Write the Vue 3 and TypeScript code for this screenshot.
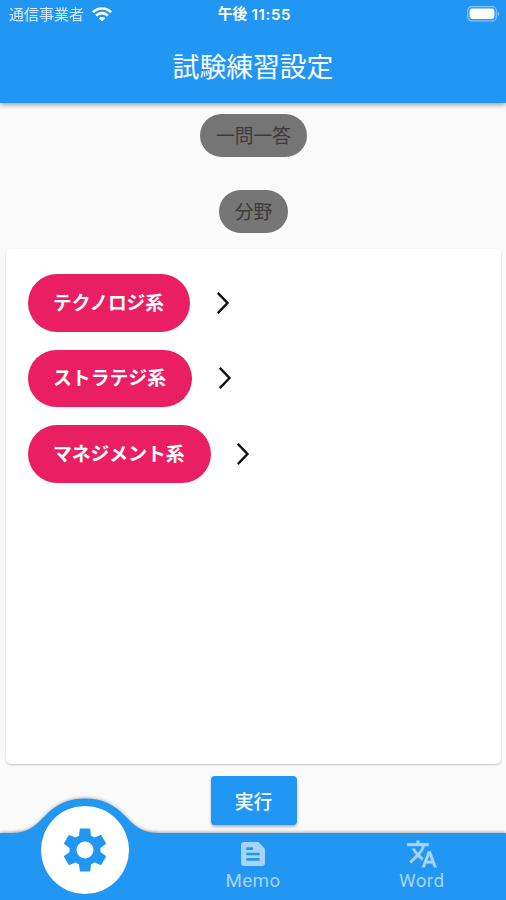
<script setup lang="ts">
interface Category {
  label: string
  width: number
}

const categories: Category[] = [
  { label: 'テクノロジ系', width: 111 },
  { label: 'ストラテジ系', width: 113 },
  { label: 'マネジメント系', width: 131.5 },
]

const teeth: number[] = [0, 60, 120, 180, 240, 300]
</script>

<template>
  <div class="screen">
    <header class="header">
      <div class="status">
        <div class="carrier">
          <span class="carrier-name">通信事業者</span>
          <svg class="wifi" viewBox="0 0 20 15">
            <path d="M1 5.2a12.8 12.8 0 0 1 18 0M4.2 8.6a8.2 8.2 0 0 1 11.6 0" fill="none" stroke="#fff" stroke-width="2.7" />
            <path d="M10 14.6l-3.2-3.3a4.6 4.6 0 0 1 6.4 0z" fill="#fff" />
          </svg>
        </div>
        <div class="clock"><span>午後</span><span class="digits">11:55</span></div>
        <svg class="battery" viewBox="0 0 33 16">
          <rect x=".7" y=".7" width="28.6" height="14.2" rx="4" fill="none" stroke="#fff" stroke-opacity=".45" stroke-width="1.2" />
          <rect x="2.6" y="2.6" width="24.8" height="10.4" rx="2.4" fill="#fff" />
          <path d="M30.8 5.4c1.6.6 1.6 4.2 0 4.8z" fill="#fff" fill-opacity=".5" />
        </svg>
      </div>
      <h1 class="title">試験練習設定</h1>
    </header>

    <main class="content">
      <span class="chip">一問一答</span>
      <span class="chip chip-second">分野</span>

      <section class="card">
        <div v-for="item in categories" :key="item.label" class="row">
          <button class="pill" type="button">
            <svg class="pill-text" :style="{ width: item.width + 'px' }" height="24">
              <text x="0" y="19" :textLength="item.width" lengthAdjust="spacingAndGlyphs">{{ item.label }}</text>
            </svg>
          </button>
          <svg class="chevron" viewBox="0 0 14 24">
            <path d="M1.8 1.8L11.5 12 1.8 22.2" fill="none" stroke="#111" stroke-width="2.4" />
          </svg>
        </div>
      </section>

      <button class="run" type="button">実行</button>
    </main>

    <nav class="nav">
      <svg class="bump" viewBox="0 0 146 36">
        <path d="M0 36V35C16 35 23 28 33 18C44 6 57 .5 73 .5S102 6 113 18C123 28 130 35 146 35V36z" fill="#2196f3" />
      </svg>
      <div class="tab tab-active">
        <span class="disc">
          <svg class="gear" viewBox="-24 -24 48 48">
            <circle r="12" fill="none" stroke="#2196f3" stroke-width="7" />
            <path
              v-for="angle in teeth"
              :key="angle"
              d="M-6.1 -13.2L-5.2 -21.1Q-5.1 -21.6 -4.6 -21.6H4.6Q5.1 -21.6 5.2 -21.1L6.1 -13.2z"
              :transform="`rotate(${angle})`"
              fill="#2196f3"
            />
          </svg>
        </span>
      </div>
      <div class="tab">
        <svg class="icon" viewBox="0 0 24 24">
          <path d="M16 3H5c-1.1 0-2 .9-2 2v14c0 1.1.9 2 2 2h14c1.1 0 2-.9 2-2V8l-5-5zM7 7h5v2H7V7zm10 10H7v-2h10v2zm0-4H7v-2h10v2z" />
        </svg>
        <span class="label">Memo</span>
      </div>
      <div class="tab">
        <svg class="icon" viewBox="0 0 24 24">
          <path d="M12.87 15.07l-2.54-2.51.03-.03c1.74-1.94 2.98-4.17 3.71-6.53H17V4h-7V2H8v2H1v1.99h11.17C11.5 7.92 10.44 9.75 9 11.35 8.07 10.32 7.3 9.19 6.69 8h-2c.73 1.63 1.73 3.17 2.98 4.56l-5.09 5.02L4 19l5-5 3.11 3.11.76-2.04zM18.5 10h-2L12 22h2l1.12-3h4.75L21 22h2l-4.5-12zm-2.62 7l1.62-4.33L19.12 17h-3.24z" stroke="currentColor" stroke-width=".35" />
        </svg>
        <span class="label">Word</span>
      </div>
    </nav>
  </div>
</template>

<style>
body {
  background: #fafafa;
}
</style>

<style scoped>
.screen {
  display: flex;
  flex-direction: column;
  width: 100%;
  height: 100vh;
  overflow: hidden;
  background: #fafafa;
  font-family: "Liberation Sans", "Noto Sans CJK JP", sans-serif;
}
.screen * {
  box-sizing: border-box;
}
.header {
  flex: none;
  height: 103px;
  background: #2196f3;
  box-shadow: 0 2px 5px rgba(0, 0, 0, 0.35);
  color: #fff;
  z-index: 1;
}
.status {
  display: grid;
  grid-template-columns: 1fr auto 1fr;
  align-items: center;
  height: 28px;
  padding: 0 6px 0 9px;
}
.carrier {
  display: flex;
  align-items: center;
  gap: 8px;
  height: 28px;
}
.carrier-name {
  padding-top: 1px;
  font-size: 15px;
  line-height: 28px;
  opacity: 0.8;
}
.wifi {
  width: 20px;
  height: 15px;
}
.clock {
  display: flex;
  gap: 4px;
  height: 28px;
  font: 600 14.8px/29px Inter, "Noto Sans CJK JP", sans-serif;
}
.digits {
  font-size: 15px;
  letter-spacing: 0.7px;
}
.battery {
  width: 33px;
  height: 16px;
  justify-self: end;
}
.title {
  margin: 0;
  padding-top: 3px;
  font-size: 26.8px;
  font-weight: 400;
  line-height: 75px;
  text-align: center;
}
.content {
  flex: 1;
  display: flex;
  flex-direction: column;
  align-items: center;
  padding: 11px 5px 8px 6px;
}
.chip {
  height: 43px;
  padding: 1px 16px 0;
  border-radius: 22px;
  background: #757575;
  color: #3b3b3b;
  font-size: 18.8px;
  line-height: 44px;
}
.chip-second {
  margin-top: 32.5px;
}
.card {
  display: flex;
  flex-direction: column;
  gap: 18px;
  width: 100%;
  height: 515px;
  margin-top: 16.5px;
  padding: 25px 21.5px;
  border-radius: 5px;
  background: #fff;
  box-shadow: 0 1px 2px rgba(0, 0, 0, 0.22);
}
.row {
  display: flex;
  align-items: center;
  gap: 25.5px;
}
.pill {
  display: flex;
  align-items: center;
  height: 57.5px;
  padding: 0 26px 0 25.5px;
  border: 0;
  border-radius: 29px;
  background: #e91e63;
}
.pill-text {
  display: block;
  overflow: visible;
  fill: #fff;
  font: 700 18.8px "Noto Sans CJK JP", sans-serif;
}
.chevron {
  width: 14px;
  height: 24px;
}
.run {
  width: 86px;
  height: 49px;
  margin-top: 12px;
  padding: 0;
  border: 0;
  border-radius: 4px;
  background: #2196f3;
  box-shadow: 0 2px 3px rgba(0, 0, 0, 0.28);
  color: #fff;
  font: 500 18.8px/49px "Noto Sans CJK JP", sans-serif;
}
.nav {
  position: relative;
  flex: none;
  display: grid;
  grid-template-columns: repeat(3, 1fr);
  height: 67px;
  background: #2196f3;
  box-shadow: 0 -1px 3px rgba(0, 0, 0, 0.3);
}
.bump {
  position: absolute;
  left: 12px;
  top: -35px;
  width: 146px;
  height: 36px;
  overflow: visible;
  filter: drop-shadow(0 -1px 1.5px rgba(0, 0, 0, 0.25));
  clip-path: inset(-6px 0 0 0);
}
.tab {
  display: flex;
  flex-direction: column;
  align-items: center;
  padding-top: 5px;
  color: #a6d5fa;
}
.tab-active {
  padding: 0 0 0 1px;
}
.disc {
  position: relative;
  display: grid;
  place-items: center;
  width: 88px;
  height: 88px;
  margin-top: -27px;
  border-radius: 50%;
  background: #fff;
}
.gear {
  width: 48px;
  height: 48px;
}
.icon {
  width: 32px;
  height: 32px;
  fill: currentColor;
}
.label {
  font: 400 18.8px/23px Roboto, sans-serif;
  letter-spacing: 0.4px;
}
</style>
